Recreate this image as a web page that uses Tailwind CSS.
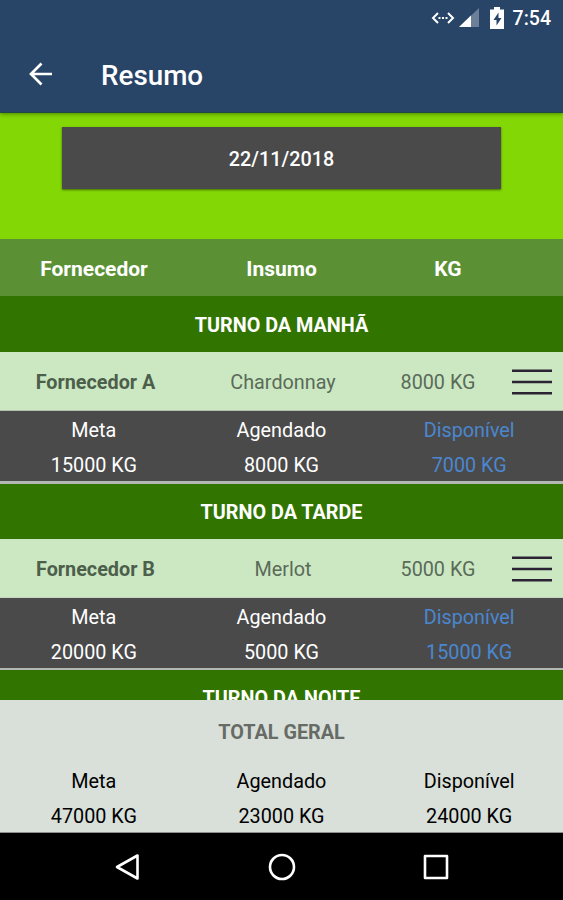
<!DOCTYPE html>
<html lang="pt-BR">
<head>
  <meta charset="UTF-8">
  <meta name="viewport" content="width=device-width, initial-scale=1.0">
  <title>Resumo</title>
  <script src="https://cdn.jsdelivr.net/npm/@tailwindcss/browser@4"></script>
</head>
<body class="bg-black">
  <div class="flex flex-col w-[563px] h-[900px] overflow-hidden font-[Roboto,sans-serif] text-[19.8px] leading-6 whitespace-nowrap">

    <!-- header -->
    <header class="relative z-10 h-[113px] shrink-0 bg-[#284467] text-white border-b border-[#1c4a45] shadow-[0_1px_4px_rgba(0,0,0,0.4)]">
      <div class="flex items-center justify-end h-9 pr-3">
        <svg class="w-6 h-4 mr-1" viewBox="0 0 24 16" fill="none" stroke="#fff" stroke-width="2">
          <path d="M7 3L2 8l5 5M17 3l5 5-5 5"/>
          <path d="M7.5 8h9" stroke-dasharray="2 1.5"/>
        </svg>
        <svg class="w-5 h-5 mr-[11px]" viewBox="0 0 20 20">
          <path d="M0 19L20 0v19z" fill="#6b7f98"/>
          <path d="M0 19L12 7.6V19z" fill="#fff"/>
        </svg>
        <svg class="w-3.5 h-[22px] mr-[9px]" viewBox="0 0 14 22">
          <path d="M4 0h6v2.500h4V22H0V2.500h4z" fill="#fff"/>
          <path d="M8.500 5.500L3.500 13h3v5.500l5-7.500H8.500z" fill="#284467"/>
        </svg>
        <span class="pt-0.5 text-[19.5px] font-medium">7:54</span>
      </div>
      <div class="flex items-center h-[76px] pl-7">
        <svg class="w-6 h-6" viewBox="0 0 24 24" fill="none" stroke="#fff" stroke-width="2.700">
          <path d="M13.500 1.500L3 12l10.500 10.500M2.500 12H24"/>
        </svg>
        <h1 class="ml-[49px] pt-[3px] text-[27.8px] font-medium">Resumo</h1>
      </div>
    </header>

    <!-- data -->
    <div class="h-[126px] shrink-0 bg-[#82d704] pt-3.5">
      <button class="block mx-auto w-[439px] h-[62px] pt-[3px] bg-[#4a4a4a] text-white text-[19.8px] font-medium shadow-[0_1px_2px_rgba(0,0,0,0.5)]">22/11/2018</button>
    </div>

    <div class="flex items-center h-[57px] pt-0.5 shrink-0 bg-[#5b9134] text-white text-[21px] font-bold text-center">
      <div class="w-[188px]">Fornecedor</div>
      <div class="w-[187px]">Insumo</div>
      <div class="w-[146px]">KG</div>
    </div>

    <!-- turnos -->
    <main class="h-[404px] shrink-0 overflow-hidden bg-[#b4b8b2]">
      <section class="mb-[3px]">
        <h2 class="flex items-center justify-center h-14 pt-1 bg-[#317500] text-white font-bold">TURNO DA MANHÃ</h2>
        <div class="flex items-center h-[59px] bg-[#cce8c3] border-b border-[#b5bdb1] text-[#5a6b58] text-center">
          <div class="w-[191px] pt-1 font-bold text-[#4c5f4b]">Fornecedor A</div>
          <div class="w-[184px] pt-1">Chardonnay</div>
          <div class="w-[126px] pt-1">8000 KG</div>
          <svg class="ml-[11px] mt-0.5 w-10 h-7" viewBox="0 0 40 28" stroke="#2b2233" stroke-width="2.600">
            <path d="M0 2.800h40M0 14h40M0 25.200h40"/>
          </svg>
        </div>
        <div class="grid grid-cols-3 h-[70px] pt-2 gap-y-[11px] content-start bg-[#4a4a4a] text-white text-center">
          <div>Meta</div>
          <div>Agendado</div>
          <div class="text-[#4a87cf]">Disponível</div>
          <div>15000 KG</div>
          <div>8000 KG</div>
          <div class="text-[#4a87cf]">7000 KG</div>
        </div>
      </section>

      <section class="mb-0.5">
        <h2 class="flex items-center justify-center h-[55px] pt-0.5 bg-[#317500] text-white font-bold">TURNO DA TARDE</h2>
        <div class="flex items-center h-[59px] bg-[#cce8c3] border-b border-[#c9d3c5] text-[#5a6b58] text-center">
          <div class="w-[191px] pt-1 font-bold text-[#4c5f4b]">Fornecedor B</div>
          <div class="w-[184px] pt-1">Merlot</div>
          <div class="w-[126px] pt-1">5000 KG</div>
          <svg class="ml-[11px] mt-0.5 w-10 h-7" viewBox="0 0 40 28" stroke="#2b2233" stroke-width="2.600">
            <path d="M0 2.800h40M0 14h40M0 25.200h40"/>
          </svg>
        </div>
        <div class="grid grid-cols-3 h-[70px] pt-2 gap-y-[11px] content-start bg-[#4a4a4a] text-white text-center">
          <div>Meta</div>
          <div>Agendado</div>
          <div class="text-[#4a87cf]">Disponível</div>
          <div>20000 KG</div>
          <div>5000 KG</div>
          <div class="text-[#4a87cf]">15000 KG</div>
        </div>
      </section>

      <section>
        <h2 class="flex items-center justify-center h-14 pt-0.5 bg-[#317500] text-white font-bold">TURNO DA NOITE</h2>
      </section>
    </main>

    <!-- total -->
    <div class="h-[133px] shrink-0 bg-[#d9dfd9] text-black text-center pt-[21px] border-b border-[#8a8f8a]">
      <h2 class="font-bold text-[#666b66]">TOTAL GERAL</h2>
      <div class="grid grid-cols-3 mt-[25px] gap-y-[11px]">
        <div>Meta</div>
        <div>Agendado</div>
        <div>Disponível</div>
        <div>47000 KG</div>
        <div>23000 KG</div>
        <div>24000 KG</div>
      </div>
    </div>

    <!-- android nav -->
    <nav class="flex items-center justify-between grow bg-black px-[114px]">
      <svg class="w-[26px] h-7" viewBox="0 0 26 28" fill="none" stroke="#fff" stroke-width="2.600" stroke-linejoin="round">
        <path d="M23.500 2.500v23L3 14z"/>
      </svg>
      <svg class="w-7 h-7" viewBox="0 0 28 28" fill="none" stroke="#fff" stroke-width="2.600">
        <circle cx="14" cy="14" r="12"/>
      </svg>
      <svg class="w-[26px] h-[26px]" viewBox="0 0 26 26" fill="none" stroke="#fff" stroke-width="2.600" stroke-linejoin="round">
        <rect x="2" y="2" width="22" height="22"/>
      </svg>
    </nav>
  </div>
</body>
</html>
